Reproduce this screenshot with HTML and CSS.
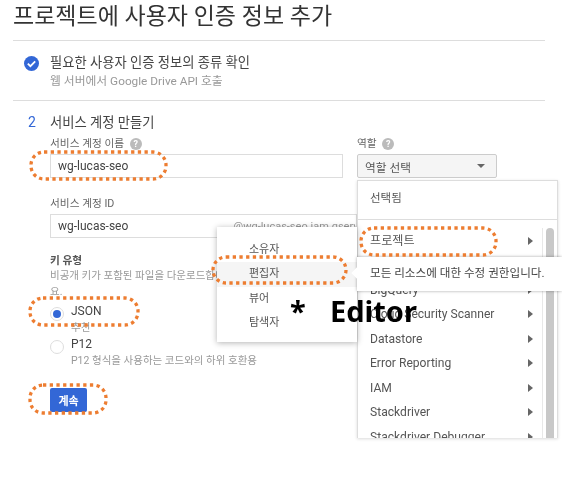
FILE: index.html
```html
<!DOCTYPE html>
<html>
<head>
<meta charset="utf-8">
<link rel="stylesheet" href="styles.css">
</head>
<body>

<div class="page">
  <h1 class="title">프로젝트에 사용자 인증 정보 추가</h1>

  <section class="step step-done">
    <svg class="check" width="15" height="15" viewBox="0 0 15 15">
      <circle cx="7.5" cy="7.5" r="7.5" fill="#3367d6"/>
      <path d="M3.8 7.6l2.6 2.6 4.8-4.9" fill="none" stroke="#fff" stroke-width="1.8"/>
    </svg>
    <div>
      <div class="step-title">필요한 사용자 인증 정보의 종류 확인</div>
      <div class="step-sub">웹 서버에서 Google Drive API 호출</div>
    </div>
  </section>

  <section class="step step-open">
    <div class="step-head">
      <span class="step-num">2</span>
      <span class="step-title">서비스 계정 만들기</span>
    </div>

    <div class="form-row">
      <div class="field">
        <div class="label">서비스 계정 이름 <span class="help">?</span></div>
        <div class="input">wg-lucas-seo</div>
      </div>
      <div class="field-role">
        <div class="label">역할 <span class="help">?</span></div>
        <div class="select">
          <span>역할 선택</span>
          <span class="caret"></span>
        </div>
      </div>
    </div>

    <div class="field field-id">
      <div class="label">서비스 계정 ID</div>
      <div class="input input-id">wg-lucas-seo <span class="domain">@wg-lucas-seo.iam.gserviceaccount.com</span></div>
    </div>

    <div class="key-type">
      <div class="key-title">키 유형</div>
      <div class="key-desc">비공개 키가 포함된 파일을 다운로드합니다.<br>요.</div>
    </div>

    <div class="radio-row">
      <span class="radio radio-on"></span>
      <div>
        <div class="radio-name">JSON</div>
        <div class="radio-sub">추천</div>
      </div>
    </div>
    <div class="radio-row radio-row-p12">
      <span class="radio"></span>
      <div>
        <div class="radio-name">P12</div>
        <div class="radio-sub">P12 형식을 사용하는 코드와의 하위 호환용</div>
      </div>
    </div>

    <button class="button">계속</button>
  </section>

  <!-- role dropdown -->
  <div class="role-menu">
    <div class="role-selected">선택됨</div>
    <div class="role-list">
      <div class="role-item">프로젝트<span class="arrow"></span></div>
      <div class="role-item">App Engine<span class="arrow"></span></div>
      <div class="role-item">BigQuery<span class="arrow"></span></div>
      <div class="role-item">Cloud Security Scanner<span class="arrow"></span></div>
      <div class="role-item">Datastore<span class="arrow"></span></div>
      <div class="role-item">Error Reporting<span class="arrow"></span></div>
      <div class="role-item">IAM<span class="arrow"></span></div>
      <div class="role-item">Stackdriver<span class="arrow"></span></div>
      <div class="role-item">Stackdriver Debugger<span class="arrow"></span></div>
    </div>
    <div class="scrollbar"><div class="thumb"></div></div>
  </div>

  <div class="sub-menu">
    <div class="sub-item">소유자</div>
    <div class="sub-item sub-item-active">편집자</div>
    <div class="sub-item">뷰어</div>
    <div class="sub-item">탐색자</div>
  </div>

  <div class="tip">모든 리소스에 대한 수정 권한입니다.</div>

  <!-- annotations drawn on top of the screenshot -->
  <svg class="marks" width="562" height="480" viewBox="0 0 562 480">
    <rect x="31" y="152" width="135" height="27" rx="13"/>
    <rect x="361" y="228" width="135" height="27" rx="13"/>
    <rect x="213" y="257" width="133" height="26" rx="13"/>
    <rect x="30" y="298" width="108" height="27" rx="13"/>
    <rect x="30" y="385" width="76" height="28" rx="13"/>
  </svg>
  <div class="note"><span class="note-star">*</span>Editor</div>
</div>

</body>
</html>
```

FILE: styles.css
```css
html, body {
  margin: 0;
  background-color: #fff;
}

body {
  font-family: Roboto, "Noto Sans CJK KR", sans-serif;
  color: #444;
  overflow: hidden;
}

.page {
  position: relative;
  width: 562px;
  height: 480px;
  overflow: hidden;
  filter: blur(0.35px);
}

.title {
  margin: 0 17px 0 13px;
  height: 41px;
  box-sizing: border-box;
  padding-top: 2px;
  font-size: 23px;
  line-height: 30px;
  font-weight: 400;
  color: #333;
  border-bottom: 1px solid #ddd;
}

.step {
  margin: 0 17px 0 13px;
}

.step-done {
  display: flex;
  gap: 11px;
  height: 60px;
  box-sizing: border-box;
  padding: 13px 0 0 11px;
  border-bottom: 1px solid #ddd;
}

.check {
  margin-top: 2px;
}

.step-title {
  font-size: 13.3px;
  line-height: 18px;
  color: #444;
}

.step-sub {
  font-size: 11.8px;
  line-height: 18px;
  color: #999;
}

.step-open {
  padding: 11px 0 0 37px;
}

.step-head {
  position: relative;
  height: 20px;
  line-height: 20px;
}

.step-num {
  position: absolute;
  left: -9px;
  top: 0;
  margin-left: -13px;
  font-size: 14px;
  color: #3367d6;
}

.form-row {
  display: flex;
  gap: 14px;
  margin-top: 3px;
}

.field {
  width: 293px;
}

.field-role {
  width: 140px;
}

.label {
  font-size: 10.7px;
  line-height: 14px;
  margin: 2px 0 3px;
  color: #666;
}

.help {
  display: inline-block;
  width: 12px;
  height: 12px;
  margin-left: 3px;
  border-radius: 50%;
  background-color: #bbb;
  color: #fff;
  font-size: 9px;
  line-height: 12px;
  text-align: center;
  font-weight: 700;
}

.input {
  height: 24px;
  box-sizing: border-box;
  padding-left: 7px;
  border: 1px solid #ddd;
  font-size: 12px;
  line-height: 22px;
  color: #444;
  white-space: nowrap;
  overflow: hidden;
}

.select {
  display: flex;
  justify-content: space-between;
  align-items: center;
  height: 24px;
  box-sizing: border-box;
  padding: 0 11px 0 7px;
  border: 1px solid #ccc;
  border-radius: 2px;
  background-color: #f5f5f5;
  font-size: 11.7px;
  color: #555;
}

.caret {
  width: 0;
  height: 0;
  border-left: 4px solid transparent;
  border-right: 4px solid transparent;
  border-top: 4px solid #666;
}

.field-id {
  margin-top: 19px;
}

.input-id {
  width: 307px;
}

.domain {
  margin-left: 102px;
  color: #999;
  font-size: 11px;
}

.key-type {
  margin-top: 16px;
}

.key-title {
  font-size: 10.7px;
  line-height: 14px;
  font-weight: 700;
  color: #555;
}

.key-desc {
  font-size: 10.5px;
  line-height: 16px;
  color: #999;
}

.radio-row {
  display: flex;
  gap: 7px;
  margin-top: 2px;
}

.radio-row-p12 {
  margin-top: 0;
}

.radio {
  width: 14px;
  height: 14px;
  margin-top: 5px;
  box-sizing: border-box;
  border: 1px solid #ddd;
  border-radius: 50%;
  background-color: #fff;
  position: relative;
}

.radio-on::after {
  content: "";
  position: absolute;
  left: 2px;
  top: 2px;
  width: 8px;
  height: 8px;
  border-radius: 50%;
  background-color: #3367d6;
}

.radio-name {
  font-size: 12px;
  line-height: 18px;
  color: #444;
}

.radio-sub {
  font-size: 10.5px;
  line-height: 15px;
  color: #999;
}

.button {
  display: block;
  width: 37px;
  height: 24px;
  margin-top: 20px;
  padding: 0;
  border: none;
  border-radius: 2px;
  background-color: #3367d6;
  color: #fff;
  font-family: inherit;
  font-size: 11px;
  font-weight: 700;
}

.role-menu {
  position: absolute;
  left: 357px;
  top: 180px;
  width: 201px;
  height: 258px;
  overflow: hidden;
  background-color: #fff;
  border: 1px solid #ddd;
  border-bottom: none;
  box-sizing: border-box;
  box-shadow: 0 1px 3px rgba(0,0,0,0.15);
}

.role-selected {
  height: 38px;
  padding-left: 12px;
  font-size: 11.5px;
  line-height: 35px;
  border-bottom: 1px solid #ddd;
  color: #555;
}

.role-list {
  padding-top: 8.5px;
}

.role-item {
  position: relative;
  height: 24.5px;
  padding-left: 12px;
  font-size: 12.1px;
  line-height: 24.5px;
  color: #555;
  white-space: nowrap;
}

.arrow {
  position: absolute;
  left: 170px;
  top: 8px;
  width: 0;
  height: 0;
  border-top: 4.5px solid transparent;
  border-bottom: 4.5px solid transparent;
  border-left: 5px solid #666;
}

.scrollbar {
  position: absolute;
  right: 0;
  top: 47px;
  bottom: 0;
  width: 14px;
  border-left: 1px solid #e8e8e8;
}

.thumb {
  width: 8px;
  height: 100%;
  margin: 0 0 0 3px;
  border-radius: 4px 4px 0 0;
  background-color: #c8c8c8;
}

.sub-menu {
  position: absolute;
  left: 217px;
  top: 227px;
  width: 140px;
  height: 115px;
  box-sizing: border-box;
  padding-top: 11px;
  background-color: #fff;
  box-shadow: 0 1px 6px rgba(0,0,0,0.3);
}

.sub-item {
  height: 24.3px;
  padding-left: 32px;
  font-size: 11px;
  line-height: 24px;
  color: #555;
}

.sub-item-active {
  background-color: #f5f5f5;
}

.tip {
  position: absolute;
  left: 357px;
  top: 257px;
  width: 205px;
  height: 34px;
  box-sizing: border-box;
  padding-left: 13px;
  background-color: #fff;
  font-size: 11.6px;
  line-height: 33px;
  color: #444;
  white-space: nowrap;
  box-shadow: 0 0 3px rgba(0,0,0,0.35);
}

.tip::before {
  content: "";
  position: absolute;
  left: -4px;
  top: 12px;
  width: 8px;
  height: 8px;
  background-color: #fff;
  transform: rotate(45deg);
}

.marks {
  position: absolute;
  left: 0;
  top: 0;
}

.marks rect {
  fill: none;
  stroke: #ed7d31;
  stroke-width: 3.3;
  stroke-dasharray: 3.3 3.4;
}

.note {
  position: absolute;
  left: 290px;
  top: 292px;
  font-family: "Noto Sans", sans-serif;
  font-size: 29px;
  line-height: 38px;
  font-weight: 700;
  color: #000;
  white-space: nowrap;
}

.note-star {
  display: inline-block;
  width: 40px;
}
```
